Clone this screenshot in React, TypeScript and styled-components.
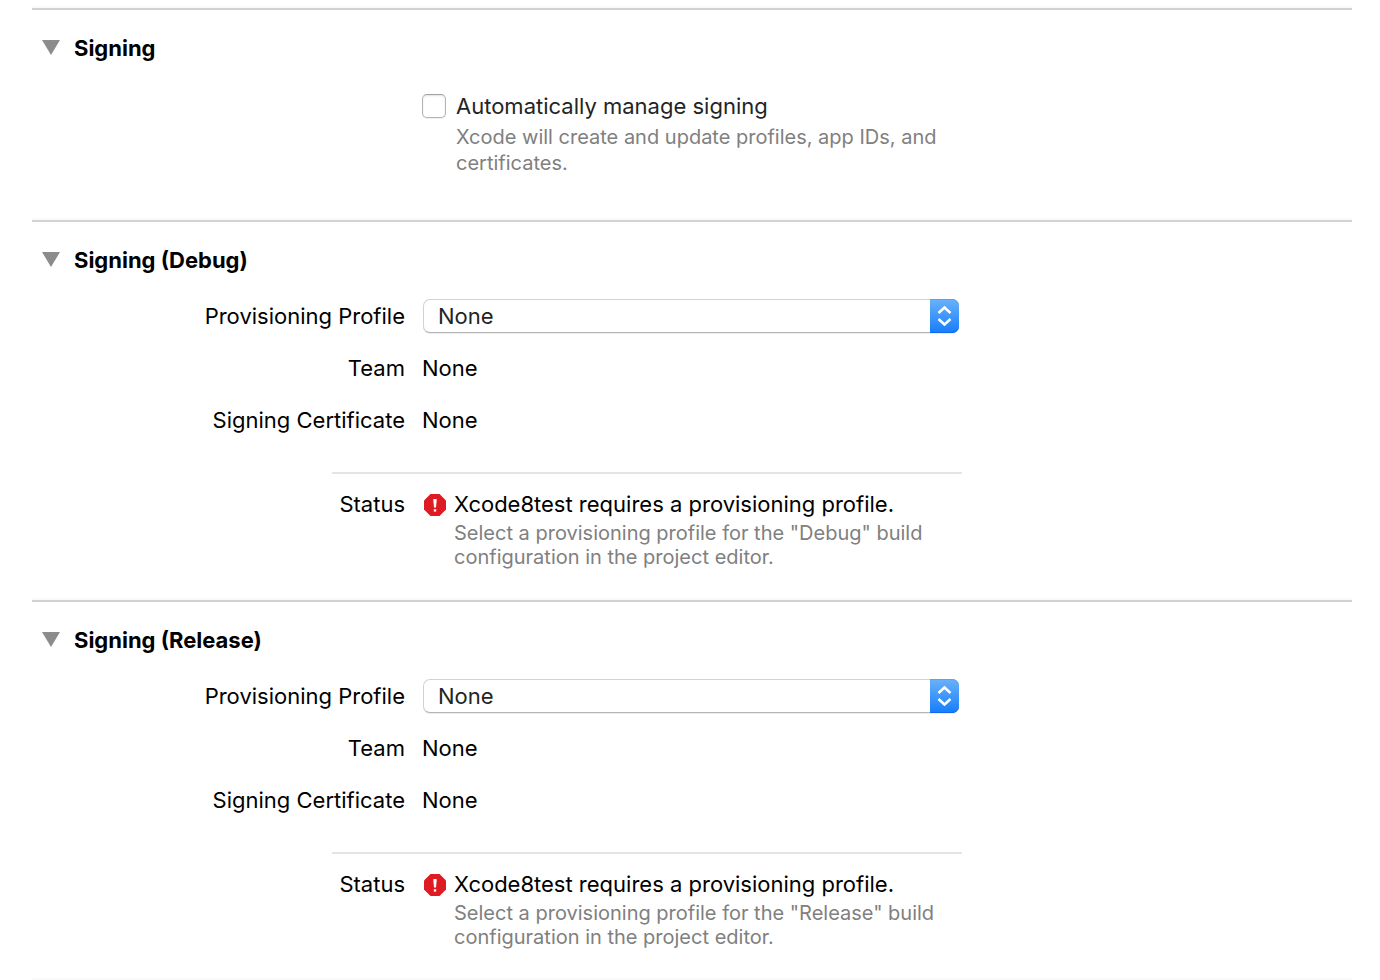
import React, { useId, useState } from "react";
import styled, { createGlobalStyle } from "styled-components";

const GlobalStyle = createGlobalStyle`
  *, *::before, *::after { box-sizing: border-box; }
  body {
    margin: 0;
    background: #fff;
    color: #000;
    font-family: Inter, "Liberation Sans", sans-serif;
    font-size: 22px;
    line-height: 24px;
  }
`;

const Page = styled.main`
  padding: 6px 28px 0 32px;
`;

const Section = styled.section<{ $bottom: number }>`
  padding-bottom: ${(p) => p.$bottom}px;
`;

const Rule = styled.hr`
  height: 4px;
  margin: 0 0 26px;
  border: 0;
  border-top: 2px solid #fafafa;
  background: #d2d2d2;
`;

const EndRule = styled.hr`
  height: 2px;
  margin: 0;
  border: 0;
  background: #fafafa;
`;

const Heading = styled.h2`
  margin: 0;
  font-size: 22px;
  line-height: 24px;
  font-weight: 700;
`;

const Disclosure = styled.button`
  display: flex;
  align-items: center;
  gap: 14px;
  padding: 0 0 0 10px;
  border: 0;
  background: none;
  color: inherit;
  font: inherit;
`;

const Triangle = styled.svg<{ $open: boolean }>`
  width: 18px;
  height: 16px;
  transform: rotate(${(p) => (p.$open ? 0 : -90)}deg);
`;

const Automatic = styled.div`
  display: grid;
  grid-template-columns: 24px 1fr;
  column-gap: 10px;
  max-width: 930px;
  padding: 34px 0 0 390px;
`;

const Checkbox = styled.input`
  appearance: none;
  width: 24px;
  height: 24px;
  margin: 0;
  border: 1px solid #b4b4b4;
  border-top-color: #a2a2a2;
  border-radius: 5px;
  background: #fff;
  box-shadow: inset 0 1px 2px #e2e2e2, 0 1px 0 #f0f0f0;

  &:checked {
    border-color: #1a7bf5;
    background: #2b8cfb;
  }
`;

const CheckLabel = styled.label`
  color: #242424;
`;

const Note = styled.p<{ $line: number; $top: number }>`
  grid-column: 2;
  margin: ${(p) => p.$top}px 0 0;
  color: #808080;
  font-size: 20px;
  line-height: ${(p) => p.$line}px;
`;

const Fields = styled.div`
  display: grid;
  gap: 16px;
  max-width: 930px;
  padding-top: 26px;
`;

const FieldRow = styled.div`
  display: grid;
  grid-template-columns: 373px 1fr;
  column-gap: 17px;
  align-items: center;
  min-height: 36px;
`;

const FieldLabel = styled.label`
  text-align: right;
`;

const FieldName = styled.span`
  text-align: right;
`;

const PopUp = styled.div`
  display: flex;
  position: relative;
  height: 34px;
  margin: 0 3px 0 1px;
`;

const Select = styled.select`
  appearance: none;
  flex: 1;
  padding: 0 44px 0 14px;
  border: 1px solid #d2d2d2;
  border-bottom-color: #b4b4b4;
  border-radius: 7px;
  background: #fff;
  box-shadow: 0 1px 0 #ececec;
  color: #242424;
  font: inherit;
`;

const Stepper = styled.span`
  display: flex;
  align-items: center;
  justify-content: center;
  position: absolute;
  inset: 0 0 0 auto;
  width: 29px;
  border-radius: 0 7px 7px 0;
  background: linear-gradient(#6ab2fa, #167dfb);
  box-shadow: inset 0 1px 0 #55a2f6, inset 0 -1px 0 #0f6ae6;
  pointer-events: none;
`;

const Status = styled.div`
  max-width: 930px;
  margin-top: 34px;
`;

const StatusRule = styled.hr`
  height: 2px;
  margin: 0 0 18px 300px;
  border: 0;
  background: #e4e4e4;
`;

const StatusBody = styled.div`
  display: grid;
  grid-template-columns: 373px 1fr;
  column-gap: 17px;
`;

const Message = styled.div`
  display: grid;
  grid-template-columns: 24px 1fr;
  column-gap: 8px;
  align-items: center;
`;

type PanelProps = {
  title: string;
  bottom: number;
  children: React.ReactNode;
};

function Panel({ title, bottom, children }: PanelProps) {
  const [open, setOpen] = useState(true);
  return (
    <Section $bottom={bottom}>
      <Rule />
      <Heading>
        <Disclosure aria-expanded={open} onClick={() => setOpen(!open)}>
          <Triangle $open={open} viewBox="0 0 18 16" aria-hidden="true">
            <path d="M0 0H18L9 15Z" fill="#8c8c8c" />
          </Triangle>
          {title}
        </Disclosure>
      </Heading>
      {open && children}
    </Section>
  );
}

function ErrorIcon() {
  return (
    <svg width="24" height="24" viewBox="0 0 24 24" aria-hidden="true">
      <path d="M8.5 2H17.5L24 8.5V17.5L17.5 24H8.5L2 17.5V8.5Z" fill="#e01a22" />
      <path d="M11.2 7.2Q13 6.600 14.800 7.200L14 15.500H12Z" fill="#fff" />
      <rect x="11.800" y="17.200" width="2.400" height="2.400" fill="#fff" />
    </svg>
  );
}

function ConfigurationPanel({ configuration }: { configuration: string }) {
  const id = useId();
  return (
    <Panel title={`Signing (${configuration})`} bottom={29}>
      <Fields>
        <FieldRow>
          <FieldLabel htmlFor={id}>Provisioning Profile</FieldLabel>
          <PopUp>
            <Select id={id}>
              <option>None</option>
            </Select>
            <Stepper>
              <svg width="15" height="22" viewBox="0 0 15 22" aria-hidden="true">
                <path
                  d="M1.5 8L7.5 2.5L13.5 8M1.5 14L7.5 19.5L13.5 14"
                  fill="none"
                  stroke="#fff"
                  strokeWidth="2.5"
                />
              </svg>
            </Stepper>
          </PopUp>
        </FieldRow>
        <FieldRow>
          <FieldName>Team</FieldName>
          <span>None</span>
        </FieldRow>
        <FieldRow>
          <FieldName>Signing Certificate</FieldName>
          <span>None</span>
        </FieldRow>
      </Fields>
      <Status>
        <StatusRule />
        <StatusBody>
          <FieldName>Status</FieldName>
          <Message>
            <ErrorIcon />
            <span>Xcode8test requires a provisioning profile.</span>
            <Note $line={24} $top={5}>
              {`Select a provisioning profile for the "${configuration}" build configuration in the project editor.`}
            </Note>
          </Message>
        </StatusBody>
      </Status>
    </Panel>
  );
}

export default function App() {
  return (
    <>
      <GlobalStyle />
      <Page>
        <Panel title="Signing" bottom={42}>
          <Automatic>
            <Checkbox type="checkbox" id="automatic-signing" />
            <CheckLabel htmlFor="automatic-signing">Automatically manage signing</CheckLabel>
            <Note $line={26} $top={6}>
              Xcode will create and update profiles, app IDs, and certificates.
            </Note>
          </Automatic>
        </Panel>
        <ConfigurationPanel configuration="Debug" />
        <ConfigurationPanel configuration="Release" />
        <EndRule />
      </Page>
    </>
  );
}
